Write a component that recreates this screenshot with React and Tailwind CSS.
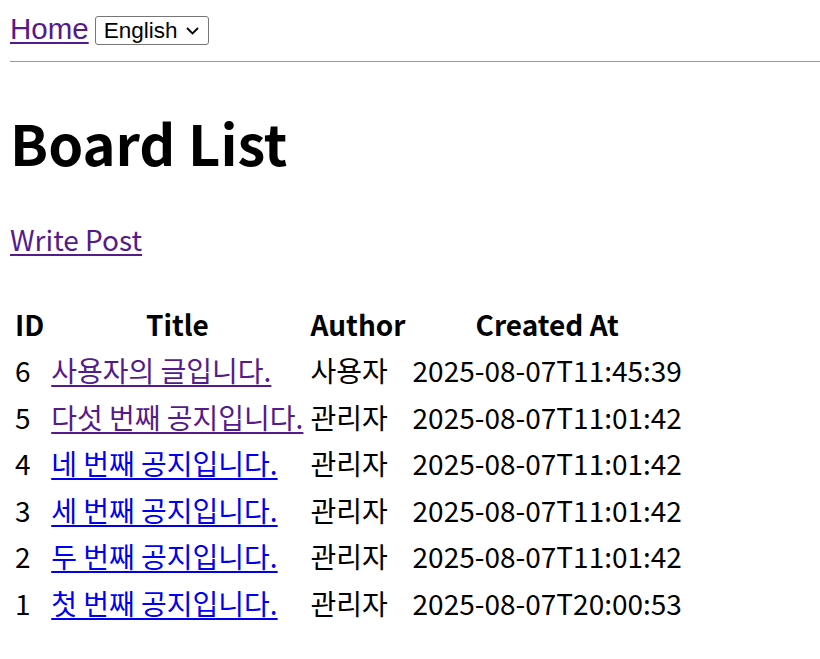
const posts = [
    { id: 6, title: '사용자의 글입니다.', author: '사용자', createdAt: '2025-08-07T11:45:39', visited: true },
    { id: 5, title: '다섯 번째 공지입니다.', author: '관리자', createdAt: '2025-08-07T11:01:42', visited: true },
    { id: 4, title: '네 번째 공지입니다.', author: '관리자', createdAt: '2025-08-07T11:01:42' },
    { id: 3, title: '세 번째 공지입니다.', author: '관리자', createdAt: '2025-08-07T11:01:42' },
    { id: 2, title: '두 번째 공지입니다.', author: '관리자', createdAt: '2025-08-07T11:01:42' },
    { id: 1, title: '첫 번째 공지입니다.', author: '관리자', createdAt: '2025-08-07T20:00:53' },
];

export default function App() {
    return (
        <div className="min-h-screen bg-white pl-[10px] text-black font-['Noto_Sans_CJK_KR','Noto_Sans',sans-serif]">
            {/* ── Top nav ── */}
            <nav className="flex items-center gap-[6px] pt-[13px] h-[45px] font-['Liberation_Sans',Arial,sans-serif]">
                <a href="#" className="text-[29.5px] leading-[32px] text-[#551a8b] underline underline-offset-[3px]">Home</a>
                <div className="mt-[3px] flex h-[29px] w-[114px] items-center justify-between rounded-[3px] border border-[#767676] pl-[8px] pr-[9px] text-[22.5px] text-black">
                    <span>English</span>
                    <svg width="13" height="8" viewBox="0 0 13 8" fill="none" stroke="currentColor" strokeWidth="1.8">
                        <path d="M1 1l5.5 5.5L12 1" />
                    </svg>
                </div>
            </nav>
            <hr className="mt-[16px] border-0 border-t border-[#9a9a9a]" />

            {/* ── Heading ── */}
            <h1 className="mt-[39px] text-[56px] leading-[81px] font-bold">Board List</h1>
            <a href="#" className="mt-[37px] block w-fit text-[28px] leading-[40px] text-[#551a8b] underline underline-offset-[3px]">Write Post</a>

            {/* ── Table ── */}
            <table className="mt-[40px] border-separate border-spacing-[3px] text-[28px] leading-[40px]">
                <thead>
                    <tr>
                        <th className="p-[2px] text-center font-bold">ID</th>
                        <th className="p-[2px] text-center font-bold">Title</th>
                        <th className="p-[2px] text-center font-bold">Author</th>
                        <th className="p-[2px] text-center font-bold">Created At</th>
                    </tr>
                </thead>
                <tbody className="leading-[39.6px]">
                    {posts.map((p) => (
                        <tr key={p.id}>
                            <td className="p-[2px]">{p.id}</td>
                            <td className="p-[2px]">
                                <a href="#" className={(p.visited ? 'text-[#551a8b]' : 'text-[#0000ee]') + ' underline underline-offset-[3px]'}>{p.title}</a>
                            </td>
                            <td className="p-[2px]">{p.author}</td>
                            <td className="p-[2px]">{p.createdAt}</td>
                        </tr>
                    ))}
                </tbody>
            </table>
        </div>
    );
}
